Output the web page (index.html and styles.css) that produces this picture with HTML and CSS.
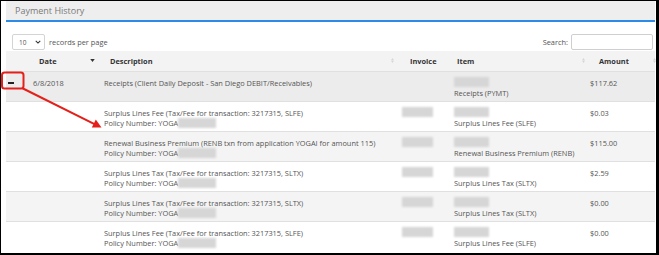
FILE: index.html
```html
<!DOCTYPE html>
<html>
<head>
<meta charset="utf-8">
<link rel="stylesheet" href="styles.css">
</head>
<body>
<div class="frame">
  <div class="panel">
    <div class="panel-head">Payment History</div>
    <div class="toolbar">
      <div class="length">
        <span class="select"><span>10</span><svg class="chev" viewBox="0 0 8 5" width="6" height="4"><path d="M1 1l3 3 3-3" fill="none" stroke="#333" stroke-width="1.4"/></svg></span>
        <span>records per page</span>
      </div>
      <div class="search"><span>Search:</span><span class="input"></span></div>
    </div>
    <table class="grid">
      <colgroup>
        <col class="w-exp"><col class="w-date"><col class="w-desc"><col class="w-inv"><col class="w-item"><col class="w-amt">
      </colgroup>
      <thead>
        <tr>
          <th class="h-exp"></th>
          <th class="h-date"><div class="th-in"><span>Date</span><svg class="sort-on" viewBox="0 0 6 4" width="5" height="3"><path d="M0 0h6L3 4z" fill="#333"/></svg></div></th>
          <th class="h-desc"><div class="th-in"><span>Description</span><svg class="sort" viewBox="0 0 4 7" width="3" height="5"><path d="M2 0L4 3H0zM2 7L0 4h4z" fill="#d6d6d6"/></svg></div></th>
          <th class="h-inv"><div class="th-in"><span>Invoice</span></div></th>
          <th class="h-item"><div class="th-in"><span>Item</span><svg class="sort" viewBox="0 0 4 7" width="3" height="5"><path d="M2 0L4 3H0zM2 7L0 4h4z" fill="#d6d6d6"/></svg></div></th>
          <th class="h-amt"><div class="th-in"><span>Amount</span><svg class="sort" viewBox="0 0 4 7" width="3" height="5"><path d="M2 0L4 3H0zM2 7L0 4h4z" fill="#d6d6d6"/></svg></div></th>
        </tr>
      </thead>
      <tbody>
        <tr class="r-main">
          <td class="c-exp"><span class="minus"></span></td>
          <td>6/8/2018</td>
          <td>Receipts (Client Daily Deposit - San Diego DEBIT/Receivables)</td>
          <td></td>
          <td><span class="blur b-item"></span><div>Receipts (PYMT)</div></td>
          <td class="c-amt">$117.62</td>
        </tr>
        <tr>
          <td></td><td></td>
          <td><div>Surplus Lines Fee (Tax/Fee for transaction: 3217315, SLFE)</div><div>Policy Number: YOGA<span class="blur b-pol"></span></div></td>
          <td><span class="blur b-inv"></span></td>
          <td><span class="blur b-item"></span><div>Surplus Lines Fee (SLFE)</div></td>
          <td class="c-amt">$0.03</td>
        </tr>
        <tr class="r-alt">
          <td></td><td></td>
          <td><div>Renewal Business Premium (RENB txn from application YOGAI for amount 115)</div><div>Policy Number: YOGA<span class="blur b-pol"></span></div></td>
          <td><span class="blur b-inv"></span></td>
          <td><span class="blur b-item"></span><div>Renewal Business Premium (RENB)</div></td>
          <td class="c-amt">$115.00</td>
        </tr>
        <tr>
          <td></td><td></td>
          <td><div>Surplus Lines Tax (Tax/Fee for transaction: 3217315, SLTX)</div><div>Policy Number: YOGA<span class="blur b-pol"></span></div></td>
          <td><span class="blur b-inv"></span></td>
          <td><span class="blur b-item"></span><div>Surplus Lines Tax (SLTX)</div></td>
          <td class="c-amt">$2.59</td>
        </tr>
        <tr class="r-alt">
          <td></td><td></td>
          <td><div>Surplus Lines Tax (Tax/Fee for transaction: 3217315, SLTX)</div><div>Policy Number: YOGA<span class="blur b-pol"></span></div></td>
          <td><span class="blur b-inv"></span></td>
          <td><span class="blur b-item"></span><div>Surplus Lines Tax (SLTX)</div></td>
          <td class="c-amt">$0.00</td>
        </tr>
        <tr>
          <td></td><td></td>
          <td><div>Surplus Lines Fee (Tax/Fee for transaction: 3217315, SLFE)</div><div>Policy Number: YOGA<span class="blur b-pol"></span></div></td>
          <td><span class="blur b-inv"></span></td>
          <td><span class="blur b-item"></span><div>Surplus Lines Fee (SLFE)</div></td>
          <td class="c-amt">$0.00</td>
        </tr>
      </tbody>
    </table>
  </div>
  <svg class="annot" width="659" height="255" viewBox="0 0 659 255">
    <rect x="2" y="72.5" width="21.5" height="16" rx="2.5" fill="none" stroke="#e3201b" stroke-width="2"/>
    <line x1="22" y1="88" x2="95" y2="124.3" stroke="#e3201b" stroke-width="2"/>
    <polygon points="101.5,127.5 91.8,127.4 95.8,119.4" fill="#e3201b"/>
  </svg>
</div>
</body>
</html>
```
FILE: styles.css
```css
* { box-sizing: border-box; }
body { margin: 0; font-family: "Open Sans", "Liberation Sans", sans-serif; color: #555; }
.frame {
  width: 659px; height: 255px;
  border: 1px solid #000; border-right-width: 3px; border-bottom-width: 2px;
  padding-left: 5px; position: relative; overflow: hidden; background: #fff;
}
.panel { width: 649px; }
.panel-head {
  height: 21px; background: #eeeeee; border-bottom: 2px solid #2b8be6;
  padding-left: 9px; font-size: 9px; line-height: 19px; color: #7a7a7a;
}
.toolbar {
  display: flex; justify-content: space-between; align-items: center;
  height: 29px; padding: 12px 2px 1px 6px; font-size: 7.4px; color: #555;
}
.length { display: flex; align-items: center; gap: 4px; }
.select {
  width: 33px; height: 16px; border: 1px solid #d4d4d4; border-radius: 2px;
  display: flex; align-items: center; justify-content: space-between;
  padding: 0 3px 0 6px; font-size: 6.5px;
}
.search { display: flex; align-items: center; gap: 3px; }
.input { width: 82px; height: 16px; border: 1px solid #cfcfcf; border-radius: 2px; }
.grid {
  width: 649px; border-collapse: collapse; table-layout: fixed;
  font-size: 7.4px; line-height: 10px;
}
.w-exp { width: 22px; } .w-date { width: 71px; } .w-desc { width: 298px; }
.w-inv { width: 52px; } .w-item { width: 137px; } .w-amt { width: 69px; }
.grid thead tr { height: 20px; }
.grid th {
  background: #f3f3f3; font-weight: 700; color: #333; text-align: left;
  vertical-align: middle; padding: 0;
}
.th-in { display: flex; justify-content: space-between; align-items: center; }
.h-date .th-in { padding: 0 4px 0 11px; }
.h-desc .th-in { padding: 0 3px 0 11px; }
.h-inv .th-in { padding: 0 0 0 13px; }
.h-item .th-in { padding: 0 1px 0 8px; }
.h-amt .th-in { padding: 0 0 0 13px; margin-right: -1px; }
.grid tbody tr { height: 30px; }
.grid td {
  padding: 6px 3px 3px 5px; vertical-align: top; border-top: 1px solid #e0e0e0;
  white-space: nowrap; overflow: visible;
}
.r-main td { background: #ececec; }
.r-alt td { background: #f4f4f4; }
.c-exp { padding: 0 !important; vertical-align: top; }
.minus { display: block; width: 6px; height: 2px; background: #222; margin: 10px 0 0 2px; }
.c-amt { padding-left: 4px !important; }
.blur { display: inline-block; background: #d6d6d6; filter: blur(1.2px); height: 10px; vertical-align: top; }
.b-item { display: block; width: 35px; margin-top: -1px; margin-bottom: 1px; }
.b-inv { width: 31px; margin-top: -1px; }
.b-pol { width: 38px; }
.annot { position: absolute; left: -1px; top: -1px; pointer-events: none; }
```
